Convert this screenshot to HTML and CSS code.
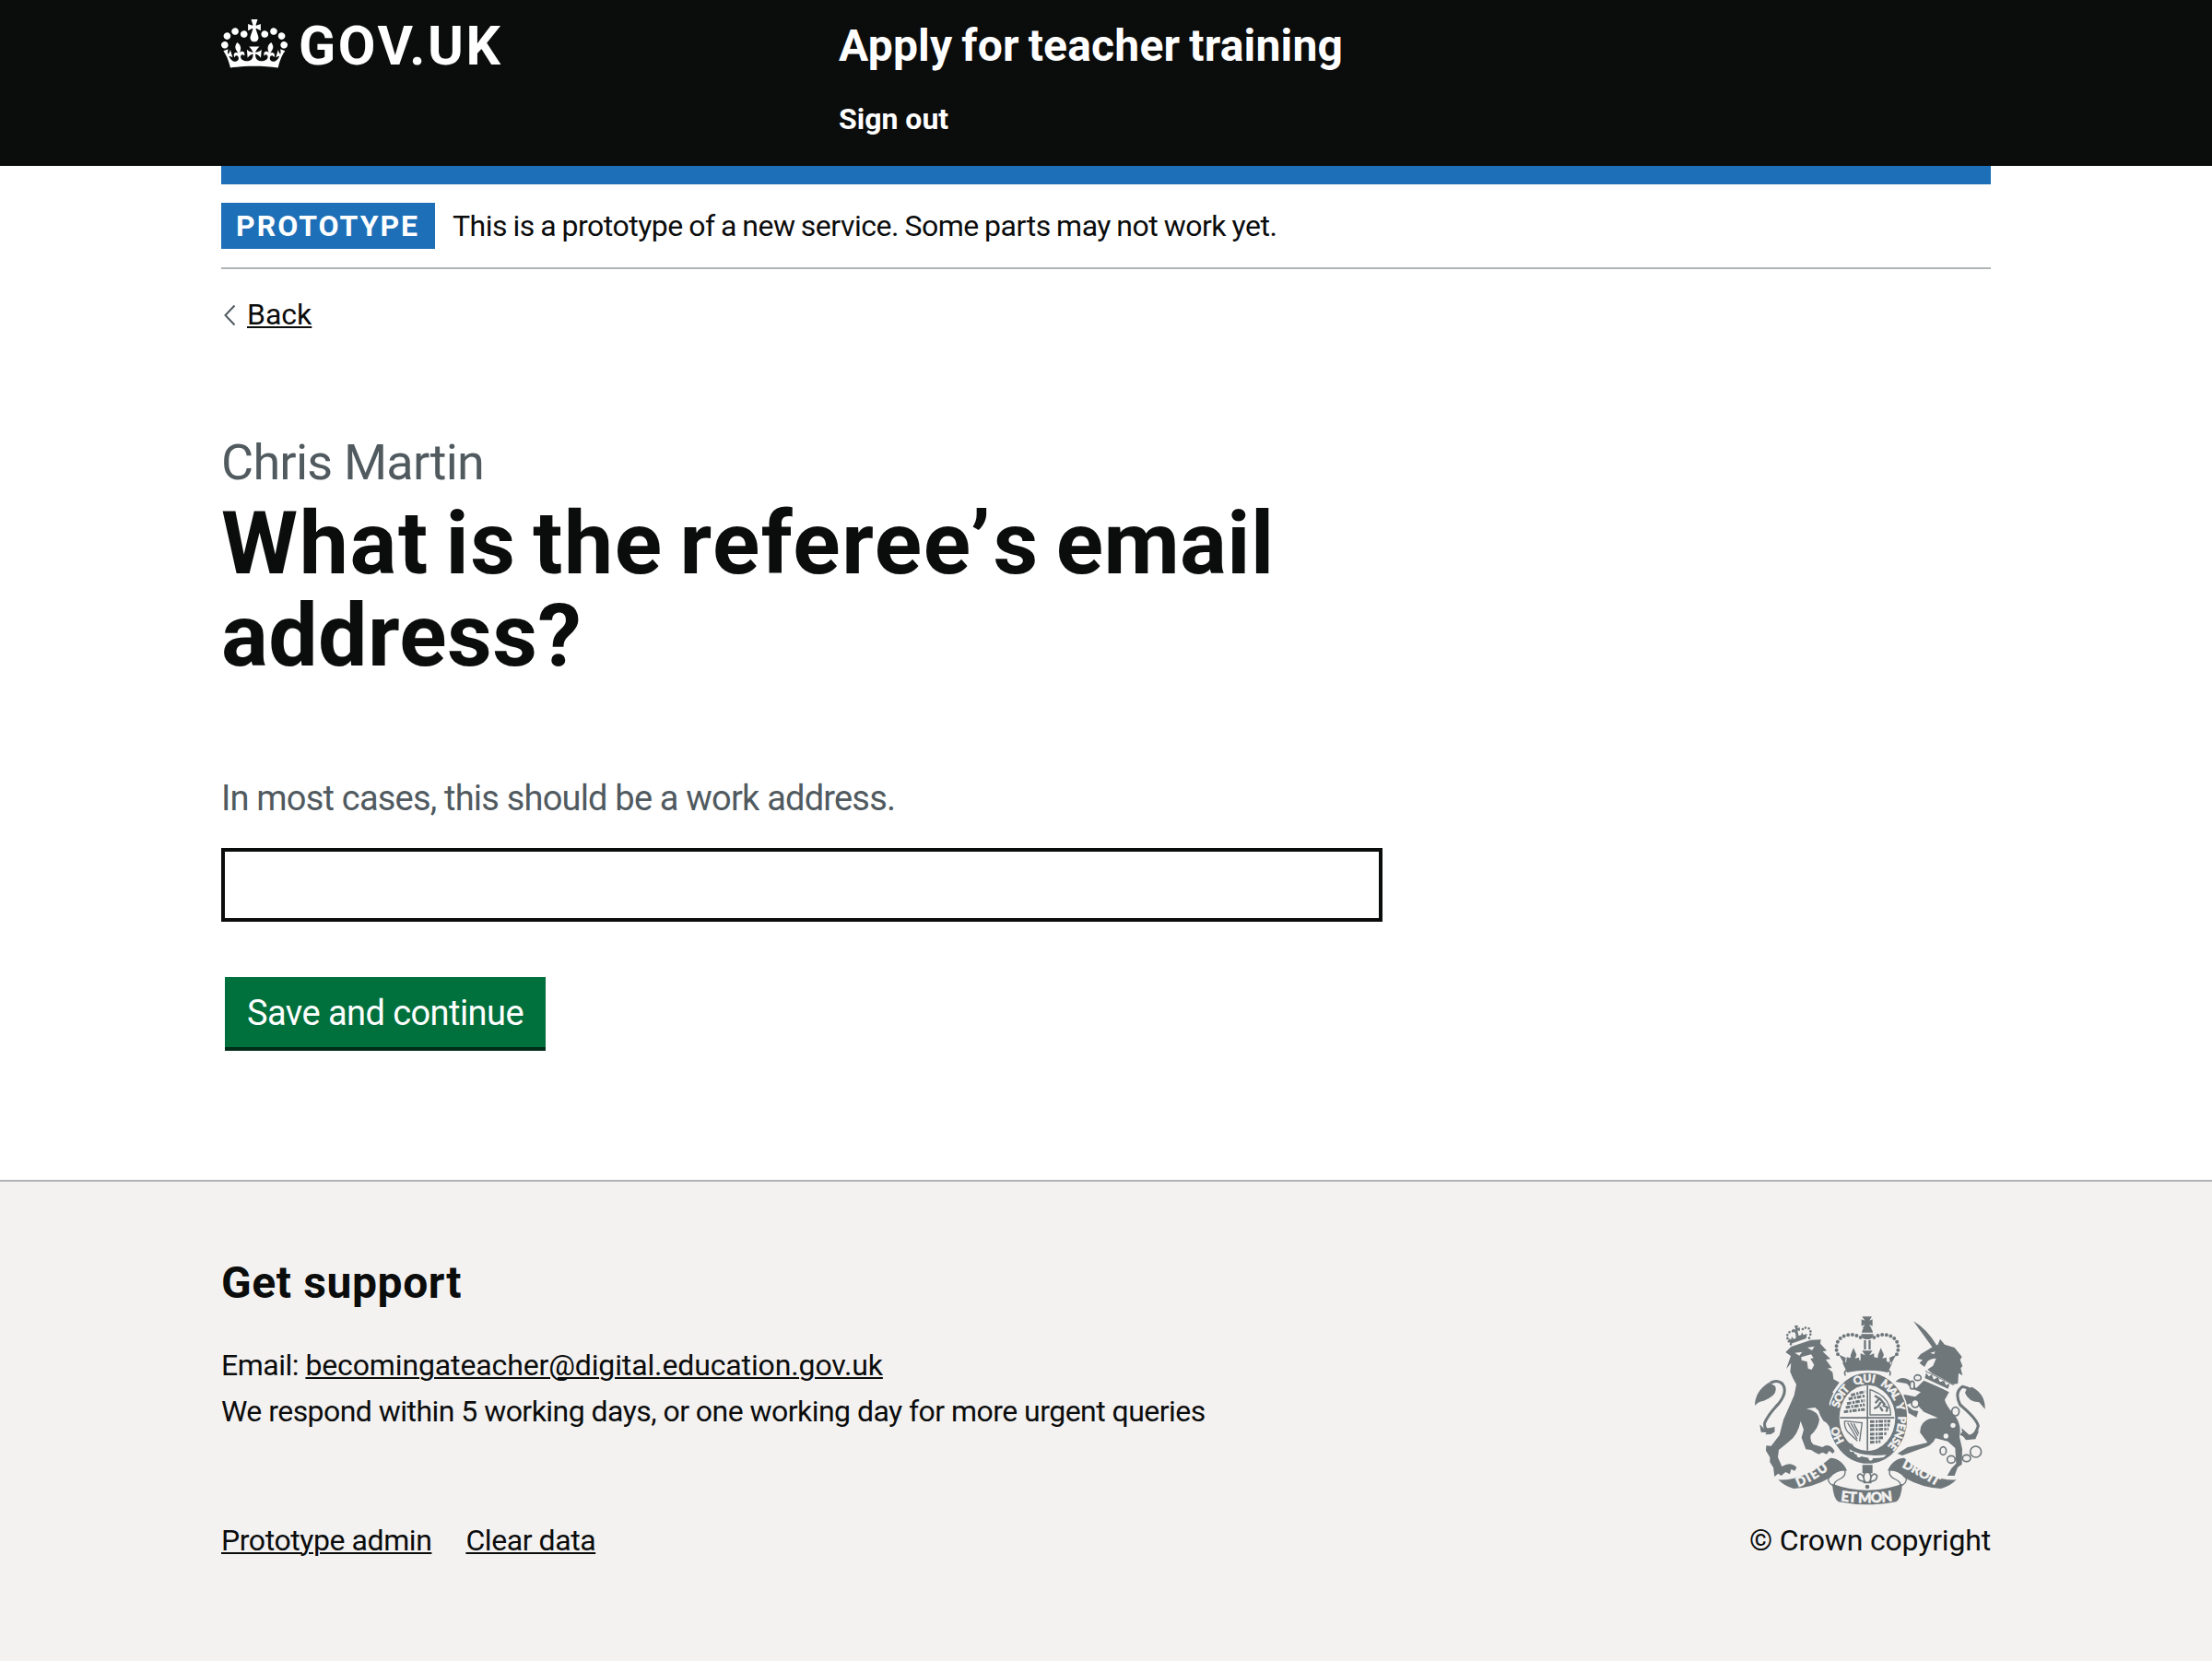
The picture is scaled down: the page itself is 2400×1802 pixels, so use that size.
FILE: index.html
```html
<!DOCTYPE html>
<html lang="en">
<head>
<meta charset="utf-8">
<title>What is the referee’s email address? - Apply for teacher training - GOV.UK</title>
<link rel="stylesheet" href="styles.css">
</head>
<body>
<header class="header">
  <div class="container header-inner">
    <a class="logo" href="#">
      <svg class="crown" viewBox="0 0 132 97" width="72" height="53" aria-hidden="true"><path fill="currentColor" fill-rule="evenodd" d="M25 30.2c3.5 1.5 7.7-.2 9.1-3.7 1.5-3.6-.2-7.8-3.9-9.2-3.6-1.4-7.6.3-9.1 3.9-1.4 3.5.3 7.5 3.9 9zM9 39.5c3.6 1.5 7.8-.2 9.2-3.7 1.5-3.6-.2-7.8-3.9-9.1-3.6-1.5-7.6.2-9.1 3.8-1.4 3.5.3 7.5 3.8 9zM4.4 57.2c3.5 1.5 7.7-.2 9.1-3.8 1.5-3.6-.2-7.7-3.9-9.1-3.5-1.5-7.6.3-9.1 3.8-1.4 3.5.3 7.6 3.9 9.1zm38.3-21.4c3.5 1.5 7.7-.2 9.1-3.8 1.5-3.6-.2-7.7-3.9-9.1-3.6-1.5-7.6.3-9.1 3.8-1.3 3.6.4 7.7 3.9 9.1zm64.4-5.6c-3.6 1.5-7.8-.2-9.1-3.7-1.5-3.6.2-7.8 3.8-9.2 3.6-1.4 7.7.3 9.2 3.9 1.3 3.5-.4 7.5-3.9 9zm15.9 9.3c-3.6 1.5-7.7-.2-9.1-3.7-1.5-3.6.2-7.8 3.7-9.1 3.6-1.5 7.7.2 9.2 3.8 1.5 3.5-.3 7.5-3.8 9zm4.7 17.7c-3.6 1.5-7.8-.2-9.2-3.8-1.5-3.6.2-7.7 3.9-9.1 3.6-1.5 7.7.3 9.2 3.8 1.3 3.5-.4 7.6-3.9 9.1zM89.3 35.8c-3.6 1.5-7.8-.2-9.2-3.8-1.4-3.6.2-7.7 3.9-9.1 3.6-1.5 7.7.3 9.2 3.8 1.4 3.6-.3 7.7-3.9 9.1zM69.7 17.7l8.9 4.7V9.3l-8.9 2.8c-.2-.3-.5-.6-.9-.9L72.4 0H59.6l3.5 11.2c-.3.3-.6.5-.9.9l-8.8-2.8v13.1l8.8-4.7c.3.3.6.7.9.9l-5 15.4v.1c-.2.8-.4 1.6-.4 2.4 0 4.1 3.1 7.5 7 8.1h.2c.3 0 .7.1 1 .1.4 0 .7 0 1-.1h.2c4-.6 7.1-4.1 7.1-8.1 0-.8-.1-1.7-.4-2.4V34l-5.1-15.4c.4-.2.7-.6 1-.9zM66 92.8c16.9 0 32.8 1.1 47.1 3.2 4-16.9 8.9-26.7 14-33.5l-9.6-3.4c1 4.9 1.1 7.2 0 10.2-1.5-1.4-3-4.3-4.2-8.7L108.6 76c2.8-2 5-3.2 7.5-3.3-4.4 9.4-10 11.9-13.6 11.2-4.3-.8-6.3-4.6-5.6-7.9 1-4.7 5.7-5.9 8-.5 4.3-8.7-3-11.4-7.6-8.8 7.1-7.2 7.9-13.5 2.1-21.1-8 6.1-8.1 12.3-4.5 20.8-4.7-5.4-12.1-2.5-9.5 6.2 3.4-5.2 7.9-2 7.2 3.1-.6 4.3-6.4 7.8-13.5 7.2-10.3-.9-10.9-8-11.2-13.8 2.5-.5 7.1 1.8 11 7.3L80.2 60c-4.1 4.4-8 5.3-12.3 5.4 1.4-4.4 8-11.6 8-11.6H55.5s6.4 7.2 7.9 11.6c-4.2-.1-8-1-12.3-5.4l1.4 16.4c3.9-5.5 8.5-7.7 10.9-7.3-.3 5.8-.9 12.8-11.1 13.8-7.2.6-12.9-2.9-13.5-7.2-.7-5 3.8-8.3 7.1-3.1 2.7-8.7-4.6-11.6-9.4-6.2 3.7-8.5 3.6-14.7-4.6-20.8-5.8 7.6-5 13.9 2.2 21.1-4.7-2.6-11.9.1-7.7 8.8 2.3-5.5 7.1-4.2 8.1.5.7 3.3-1.3 7.1-5.7 7.9-3.5.7-9-1.8-13.5-11.2 2.5.1 4.7 1.3 7.5 3.3l-4.7-15.4c-1.2 4.4-2.7 7.2-4.3 8.7-1.1-3-.9-5.3 0-10.2l-9.5 3.4c5 6.9 9.9 16.7 14 33.5 14.8-2.1 30.8-3.2 47.7-3.2z"/></svg>
      <span class="logo-text">GOV.UK</span>
    </a>
    <div class="header-content">
      <a class="service-name" href="#">Apply for teacher training</a>
      <nav><a class="nav-link" href="#">Sign out</a></nav>
    </div>
  </div>
</header>
<div class="container">
  <div class="blue-bar"></div>
  <div class="phase-banner">
    <strong class="tag">PROTOTYPE</strong>
    <span class="phase-text">This is a prototype of a new service. Some parts may not work yet.</span>
  </div>
  <div class="back">
    <svg class="chevron" viewBox="0 0 14 24" width="14" height="24" aria-hidden="true"><path d="M12.5 1.5 2.5 12l10 10.5" fill="none" stroke="#505a5f" stroke-width="2"/></svg>
    <a class="link back-link" href="#">Back</a>
  </div>
  <main class="main">
    <form>
      <span class="caption">Chris Martin</span>
      <h1 class="heading"><label for="email">What is the refere<span class="apostrophe">e’</span>s <span class="heading-end">email</span><br><span class="heading-end">address?</span></label></h1>
      <p class="hint">In most cases, this should be a work address.</p>
      <input class="input" id="email" type="email">
      <button class="button" type="button">Save and continue</button>
    </form>
  </main>
</div>
<footer class="footer">
  <div class="container footer-inner">
    <div>
      <h2 class="footer-heading">Get support</h2>
      <p class="email-line">Email: <a class="link email-link" href="#">becomingateacher@digital.education.gov.uk</a></p>
      <p class="respond-line">We respond within 5 working days, or one working day for more urgent queries</p>
      <nav class="footer-links"><a class="link" href="#">Prototype admin</a><a class="link" href="#">Clear data</a></nav>
    </div>
    <a class="copyright" href="#">
      <svg class="crest" viewBox="60 50 780 630" width="260" height="210" aria-hidden="true">
        <defs>
          <path id="garter" d="M440 504A98 117 0 0 1 342 385A98 117 0 0 1 440 268A98 117 0 0 1 538 385A98 117 0 0 1 440 504"/>
          <path id="scroll-left" d="M213 609Q265 590 318 546"/>
          <path id="scroll-right" d="M550 544Q600 568 668 609"/>
          <path id="scroll-base" d="M351 654Q438 666 526 653"/>
        </defs>
        <g class="solid">
          <!-- royal crown -->
          <path d="M421 54h32l-8 13 10-4v22l-11-5 8 13h-30l8-13-11 5V63l11 4zM420 106q2-17 18-19q16 2 18 19zM418 111h40q0 14-13 17h-14q-13-3-13-17z"/>
          <path d="M427 131h7v30h-7zM442 131h7v30h-7zM357 204q81-18 163 0l-15 32q-67-14-133 0zM346 178l22 10-3 24zM532 178l-22 10 3 24zM384 178l9-22 10 22-5 12 13-3 2 18h-44l2-19 12 3zM473 178l9-22 10 22-5 12 13-3 2 18h-44l2-19 12 3zM421 165h34l-10 15 15-6v32h-44v-32l15 6z"/>
          <path class="line beads" d="M416 122C390 105 354 112 341 137Q331 162 348 187M460 122C486 105 522 112 535 137Q545 162 528 187"/>
          <path class="line" d="M367 246q-8-16 8-18q63-11 126 0q16 2 10 18" stroke-width="5"/>
          <!-- lion -->
          <path d="M172 170L190 152L255 130L287 129L285 142L306 165L293 168L318 192L303 194L323 222L309 222L325 235L328 258L347 268L325 300L345 340L348 392L335 412L318 414L308 400L296 394L285 376L279 360L268 350L240 354Q279 362 282 390Q278 420 254 440Q250 458 262 470L292 479Q314 463 332 492L326 500L314 491L306 502L292 496L280 502L268 496L255 488L238 486L224 448L231 422L221 394Q212 440 182 462L150 488L147 512L160 542Q188 524 208 545L202 556L190 551L186 567L172 560L158 572L148 565L136 575L132 545L121 528V512L108 490L109 474L125 475L152 440L165 390L200 310L207 275L196 255L187 234L190 205L174 225L189 182Z"/>
          <path class="line" d="M136 424Q100 430 104 400Q116 372 150 337Q181 296 161 272Q145 258 122 270" stroke-width="9"/>
          <path d="M72 344q0-47 46-76l20 12q12 29-37 48-20 3-29 16zM88 405l15 15 34-7-2 17-11 7-18 1 4-7-18-1z"/>
          <path class="line small-beads" d="M189 144q-20-25-6-38 16-10 25 2M249 124q10-22-2-32-15-6-24 9"/>
          <path d="M201 83h12l-3 9 8-3 1 12-8-2 3 17 9-2 2-9 5 9 12-4-3 15-51 18-8-18 10 4 2-10 6 8 8-3-2-22-8 3-1-11 10 3z"/>
          <!-- unicorn -->
          <path d="M588 69Q630 93 663 146L650 154ZM600 191L612 176L636 162L655 150L668 145L675 127L690 145L722 155L746 185L740 195L748 215L742 222L748 246L735 238L733 272L715 275L680 255L650 240L634 226L652 214L662 190Q642 191 634 200L624 218L608 205L618 195Z"/>
          <path d="M622 262L705 298L690 325Q694 343 722 375Q746 405 738 445L747 485L746 535L732 545L722 572H698L712 548L727 532L724 482L700 460L660 450Q650 476 610 485L552 506L536 500L568 480L634 464L610 432Q608 398 640 387L668 384L622 364L604 345L582 335L565 342L586 358L604 362L598 382L566 364L550 330L538 318L560 308L594 315L612 300L586 290L566 272L530 266Q548 245 574 260L597 287Z"/>
          <path class="line" d="M742 435Q785 460 799 410Q795 387 740 341Q720 300 748 282Q765 285 780 295" stroke-width="9"/>
          <path d="M821 355q2-48-42-72l-18 7-5 12q12 30 46 31zM745 417l29 26 28-18-12 28-31 3-11-15z"/>
          <!-- garter -->
          <ellipse class="edged" cx="440" cy="385" rx="130" ry="150"/>
          <!-- scrolls -->
          <path d="M148 585Q230 590 318 514Q355 515 372 556Q338 552 318 578Q260 611 198 614Q170 607 148 585ZM728 585Q646 590 558 514Q521 515 504 556Q538 552 558 578Q616 611 678 614Q706 607 728 585ZM324 598Q438 640 552 598Q549 645 532 657Q438 675 344 657Q327 645 324 598ZM422 537h33v27h-33z"/>
          <path class="line" d="M364 554q8 18-18 30q-20 9-14 22M330 606q-23-10-18-28q13-28 46-26M512 554q-8 18 18 30q20 9 14 22M546 606q23-10 18-28q-13-28-46-26" stroke-width="4"/>
          <path class="line" d="M438 553q-22 23-4 42M438 553q22 23 4 42M431 591q-28-2-24-20q10-12 20 7M445 591q28-2 24-20q-10-12-20 7M425 594h27" stroke-width="5"/><circle cx="438" cy="608" r="7"/>
        </g>
        <g class="cutout">
          <path d="M202 172l24-3-9 12zM243 155l23-4-8 13zM223 186l32-9 8 12-10 2 12 20-8 16-12-4-3-22-18-5z"/>
          <path d="M643 172l16-4-4 9z"/><circle cx="717" cy="408" r="8"/><circle cx="694" cy="443" r="8"/>
          <path d="M624 257l4-28 94 48-14 25z"/>
          <ellipse cx="438" cy="384" rx="91" ry="107"/><path d="M370 480q45 33 130 24l-8 8q-60 12-112-20z"/>
          <circle cx="411" cy="506" r="7"/><circle cx="449" cy="516" r="7"/>
        </g>
        <g class="solid">
          <path d="M436 278h5v212h-5zM349 381h177v5H349z"/>
          <path class="line" d="M447 292v82h67Q514 313 447 292zM364 394l57 6-8 60M364 394q-1 22 10 35l32 30M374 400l31 52M384 400l24 43M394 402l17 34" stroke-width="4"/>
          <path class="line" d="M462 312l18 10 16 20M478 320l-14 16M482 332l-8 14-14 8M488 342l16 8-4 14M480 348l8 14" stroke-width="7"/>
          <path class="line beasts" d="M385 310l46-12M377 322l54-10M372 337l58-10M368 350l62-9M362 364l68-8M447 396l66-2M447 409l64-2M447 422l60-2M447 437l56-2M447 450l46-2M447 463l34-2" stroke-width="9"/>
          <path d="M366 480l20-14 8 10-14 8 2 10 13 1 2 9-17 10-13-14zM630 237l8 12 10-6 6 16 14-8 6 16 14-4 6 14 12-4-5 16-76-35z"/>
          <path class="line" d="M627 231l92 46" stroke-width="3"/>
          <g class="chain"><ellipse cx="602" cy="253" rx="11" ry="9"/><ellipse cx="584" cy="277" rx="7" ry="13"/><ellipse cx="594" cy="337" rx="12" ry="13"/><ellipse cx="725" cy="363" rx="12" ry="14"/><ellipse cx="685" cy="491" rx="10" ry="13"/><ellipse cx="711" cy="519" rx="13" ry="12"/><ellipse cx="761" cy="515" rx="13" ry="11"/><circle cx="791" cy="494" r="18"/></g>
        </g>
        <!-- lion's paw resting on the garter -->
        <path class="solid" d="M296 318Q320 340 328 372L336 394L330 402L326 412L316 414L304 398L292 388Z"/>
        <g class="motto">
          <text><textPath href="#garter" startOffset="92" textLength="54">HO</textPath></text>
          <text><textPath href="#garter" startOffset="204" textLength="72">SOIT</textPath></text>
          <text><textPath href="#garter" startOffset="296" textLength="66">QUI</textPath></text>
          <text><textPath href="#garter" startOffset="381" textLength="70">MAL</textPath></text>
          <text><textPath href="#garter" startOffset="462">Y</textPath></text>
          <text><textPath href="#garter" startOffset="503" textLength="106">PENSE</textPath></text>
          <text class="scroll"><textPath href="#scroll-left" textLength="116">DIEU</textPath></text>
          <text class="scroll"><textPath href="#scroll-right" textLength="130">DROIT</textPath></text>
          <text class="scroll base"><textPath href="#scroll-base" textLength="170">ET MON</textPath></text>
        </g>
      </svg>
      <span class="copy-text">© Crown copyright</span>
    </a>
  </div>
</footer>
</body>
</html>
```
FILE: styles.css
```css
* { box-sizing: border-box; }
body { margin: 0; background: #fff; color: #0b0c0c; font-family: Roboto, "Liberation Sans", sans-serif; font-size: 32px; line-height: 50px; }
h1, h2, p { margin: 0; }
svg { display: block; }
.container { width: 1920px; margin: 0 auto; }
.header { background: #0b0c0c; color: #fff; height: 180px; }
.header a { color: #fff; text-decoration: none; }
.header-inner { display: grid; grid-template-columns: 670px 1fr; padding-top: 20px; }
.logo { display: flex; align-items: flex-start; gap: 12px; }
.crown { margin-top: 1px; }
.logo-text { font-size: 59px; line-height: 60px; font-weight: 700; letter-spacing: 2.6px; }
.service-name { display: block; font-size: 48px; line-height: 60px; font-weight: 700; letter-spacing: 0.2px; word-spacing: -2.2px; }
.nav-link { display: block; margin-top: 29px; line-height: 40px; font-weight: 700; }
.blue-bar { height: 20px; background: #1d70b8; }
.phase-banner { display: flex; gap: 19px; padding: 20px 0; border-bottom: 2px solid #b1b4b6; }
.phase-text { letter-spacing: -0.48px; word-spacing: -1.1px; }
.tag { width: 232px; height: 50px; padding-left: 16px; background: #1d70b8; color: #fff; font-weight: 700; letter-spacing: 2px; }
.link { color: #0b0c0c; text-decoration: underline; text-decoration-thickness: 2px; text-underline-offset: 2px; }
.back { display: flex; gap: 12px; align-items: flex-start; padding: 29px 0 0 2px; line-height: 40px; }
.chevron { margin-top: 9px; }
.main { padding-top: 111px; }
.caption { display: block; font-size: 54px; line-height: 60px; letter-spacing: -0.77px; color: #505a5f; }
.heading { margin-top: 8px; font-size: 95px; line-height: 100px; font-weight: 700; letter-spacing: 1.6px; word-spacing: -7.5px; }
.apostrophe { letter-spacing: 3px; }
.heading-end { letter-spacing: 0.4px; }
.hint { margin-top: 100px; padding-top: 1px; font-size: 38px; letter-spacing: -0.8px; color: #505a5f; }
.input { display: block; width: 1260px; height: 80px; margin-top: 29px; border: 4px solid #0b0c0c; border-radius: 0; background: #fff; font: inherit; }
.button { display: block; width: 348px; height: 76px; margin: 60px 0 0 4px; padding: 2px 0 0; border: 0; background: #00703c; box-shadow: 0 4px 0 #002d18; color: #fff; font: inherit; font-size: 38px; line-height: 74px; letter-spacing: -0.56px; }
.footer { margin-top: 144px; height: 522px; border-top: 2px solid #b1b4b6; background: #f3f2f1; }
.footer-inner { display: flex; justify-content: space-between; padding-top: 80px; }
.footer-heading { margin-bottom: 34px; font-size: 48px; line-height: 60px; font-weight: 700; letter-spacing: 0.6px; }
.email-line { letter-spacing: -0.5px; }
.email-link { letter-spacing: -0.13px; }
.respond-line { letter-spacing: -0.54px; }
.footer-links { display: flex; gap: 37px; margin-top: 95px; line-height: 40px; letter-spacing: -0.43px; }
.copyright { display: flex; flex-direction: column; width: 260px; padding-top: 65px; color: #0b0c0c; text-decoration: none; line-height: 40px; }
.copy-text { margin-top: 14px; white-space: nowrap; align-self: flex-end; letter-spacing: -0.18px; }
.solid { fill: #6f777b; }
.line { fill: none; stroke: #6f777b; }
.edged { stroke: #f3f2f1; stroke-width: 5px; }
.chain { fill: #f3f2f1; stroke: #6f777b; stroke-width: 5px; }
.beads { stroke-width: 12px; stroke-linecap: round; stroke-dasharray: 0 14; }
.small-beads { stroke-width: 8px; stroke-linecap: round; stroke-dasharray: 0 11; }
.beasts { stroke-dasharray: 14 4 7 3; }
.cutout { fill: #f3f2f1; }
.motto { fill: #f3f2f1; stroke: #f3f2f1; stroke-width: 1.5px; font-family: Lato, sans-serif; font-weight: 900; font-size: 36px; }
.scroll { font-size: 42px; }
.base { font-size: 46px; }
```
